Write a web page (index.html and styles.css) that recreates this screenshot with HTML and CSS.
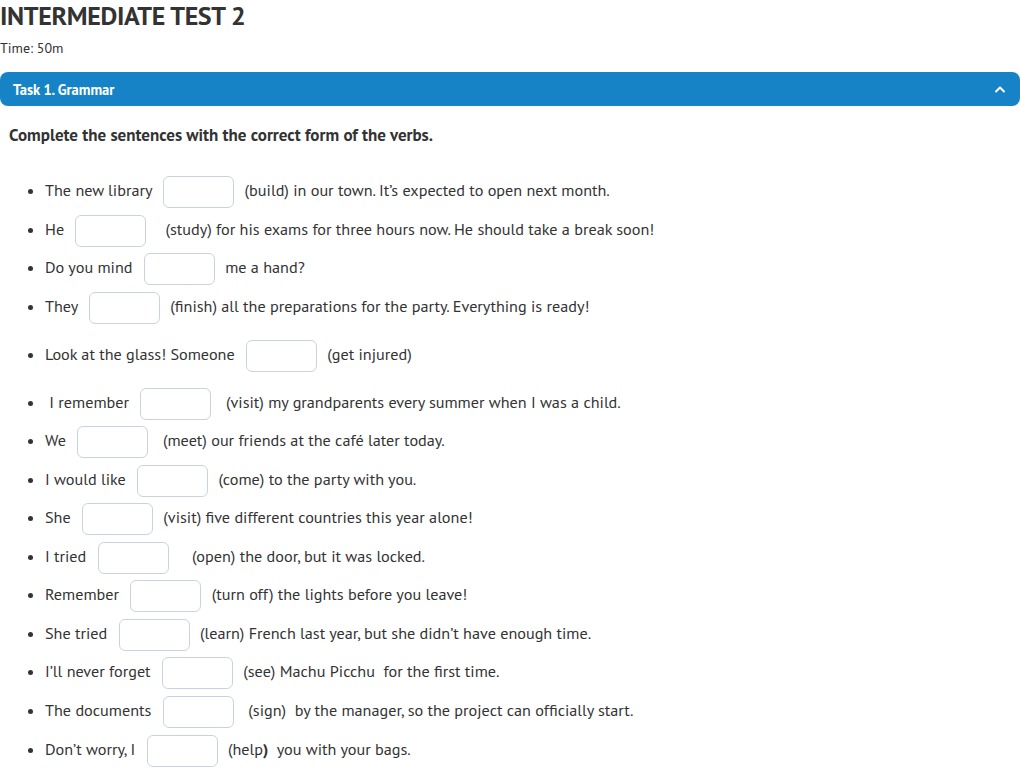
FILE: index.html
```html
<!DOCTYPE html>
<html lang="en">
<head>
<meta charset="utf-8">
<title>Intermediate Test 2</title>
<link rel="stylesheet" href="styles.css">
</head>
<body>
<header class="test-head">
  <h1 class="test-title">INTERMEDIATE TEST 2</h1>
  <div class="test-time">Time: 50m</div>
</header>
<section class="task">
  <div class="task-bar">
    <span class="task-name">Task 1. Grammar</span>
    <svg class="chev" width="12" height="8" viewBox="0 0 12 8"><path d="M2 6.5 L6 2.5 L10 6.5" fill="none" stroke="#fff" stroke-width="2" stroke-linecap="round" stroke-linejoin="round"/></svg>
  </div>
  <p class="task-instr">Complete the sentences with the correct form of the verbs.</p>
  <ul class="items">
    <li>The new library <input class="gap" type="text"> (build) in our town. It’s expected to open next month.</li>
    <li>He <input class="gap" type="text"> &nbsp; (study) for his exams for three hours now. He should take a break soon!</li>
    <li>Do you mind <input class="gap" type="text"> me a hand?</li>
    <li class="wide-after">They <input class="gap" type="text"> (finish) all the preparations for the party. Everything is ready!</li>
    <li class="wide-after">Look at the glass! Someone <input class="gap" type="text"> (get injured)</li>
    <li>&nbsp;I remember <input class="gap" type="text"> &nbsp;(visit) my grandparents every summer when I was a child.</li>
    <li>We <input class="gap" type="text"> &nbsp;(meet) our friends at the café later today.</li>
    <li>I would like <input class="gap" type="text"> (come) to the party with you.</li>
    <li>She <input class="gap" type="text"> (visit) five different countries this year alone!</li>
    <li>I tried <input class="gap" type="text"> &nbsp; &nbsp;(open) the door, but it was locked.</li>
    <li>Remember <input class="gap" type="text"> (turn off) the lights before you leave!</li>
    <li>She tried <input class="gap" type="text"> (learn) French last year, but she didn’t have enough time.</li>
    <li>I’ll never forget <input class="gap" type="text"> (see) Machu Picchu &nbsp;for the first time.</li>
    <li>The documents <input class="gap" type="text"> &nbsp;(sign) &nbsp;by the manager, so the project can officially start.</li>
    <li>Don’t worry, I <input class="gap" type="text"> (help<b>)</b> &nbsp;you with your bags.</li>
  </ul>
</section>
</body>
</html>
```
FILE: styles.css
```css
html, body {
  margin: 0;
  padding: 0;
  background: #ffffff;
}
body {
  font-family: "PT Sans", "Open Sans", "Liberation Sans", sans-serif;
  color: #333333;
  width: 1020px;
}
.test-title {
  margin: 0;
  font-size: 26px;
  line-height: 31px;
  font-weight: 700;
  color: #333333;
  letter-spacing: -0.35px;
}
.test-time {
  margin-top: 8px;
  font-size: 14px;
  line-height: 18px;
}
.task {
  margin-top: 15px;
}
.task-bar {
  height: 34px;
  background: #1583c6;
  border-radius: 8px;
  display: flex;
  align-items: center;
  justify-content: space-between;
  padding: 0 14px 0 13px;
}
.task-name {
  color: #ffffff;
  font-size: 14.5px;
  font-weight: 700;
}
.chev {
  display: block;
}
.task-instr {
  margin: 18px 0 0 9px;
  font-size: 17px;
  font-weight: 700;
  line-height: 22px;
}
.items {
  margin: 28px 0 0 0;
  padding: 0 0 0 45px;
  font-size: 16.2px;
}
.items li {
  height: 32px;
  line-height: 32px;
  margin-bottom: 6.55px;
}
.items li.wide-after {
  margin-bottom: 16px;
}
.gap {
  box-sizing: border-box;
  width: 71px;
  height: 32px;
  margin: 0 6px 0 7px;
  padding: 0 8px;
  border: 1px solid #c9d3df;
  border-radius: 6px;
  background: #ffffff;
  vertical-align: middle;
  font: inherit;
}
.items b {
  font-weight: 700;
}
```
